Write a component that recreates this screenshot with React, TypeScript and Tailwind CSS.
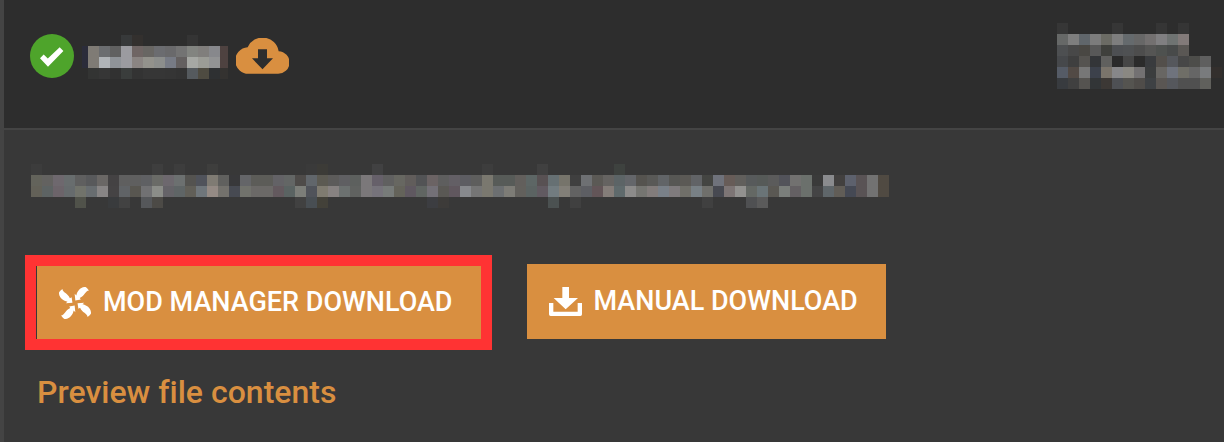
const CELL = 11;

type MosaicRow = { start: number; colors: string };

// Each row lists hex colours for consecutive cells; "-" leaves a cell empty.
const nameRows: MosaicRow[] = [
  { start: 0, colors: "- - - 37393a 33302e - - - - 343434" },
  { start: 0, colors: "7f7b75 6b6d70 606060 9b9ba0 6f6564 686663 6b6c70 69696b 737373 828480 807e7c 87888c 4e4240" },
  { start: 0, colors: "7f7b75 b0b4b8 8f9398 9b9ba0 8a8482 93928c 8c8e8c 777b85 646060 a6a8a4 9b9c96 929394 4e4240" },
  { start: 0, colors: "333433 363636 313131 3a3d3c 333333 363636 363636 353535 333333 555a5e 4e4b41 2e3032 343230" },
];

const infoRows: MosaicRow[] = [
  { start: 0, colors: "363636 - - - - 363636 - - - 353535 - 353535" },
  { start: 0, colors: "666867 7e7e7e 60666b 7c7c7c 6b6b64 7e7e7e 656a6d 676767 737070 807f81 6f7372 827a79" },
  { start: 0, colors: "4d4f51 484848 494743 585858 3f403c 4d4f52 4f5153 4d4d4d 555554 4e514f 484a4a 5a5754" },
  { start: 0, colors: "46484b 3f3f3f 555350 333538 60605e 2a2a2a 464646 2b2b2b 393b3e 534f4b 55575c 474747 4d4d4a 5f5f5f" },
  { start: 0, colors: "555b66 524a45 777777 3c414b 7a746b 878789 8a8882 737172 3b3d3e 686663 6f737d 6f6e67 666666 797b7d 332f2d" },
  { start: 0, colors: "383b3f 404040 555350 323537 3c3835 4e5054 555450 4f4c49 3e4144 5a5653 55575c 505050 505050 60605c" },
];

const descriptionRows: MosaicRow[] = [
  { start: 0, colors: "3c3c3c" },
  { start: 11, colors: "3e3e3e - 3d3d3d - - 3e3e3d" },
  { start: 25, colors: "3a3a3a 3c3b37 - - - - 414142" },
  { start: 41, colors: "3d3d3d - - - - 404040 - - - - - - 3e423f" },
];

const descriptionTop =
  "63635b 636260 6e686e 686d6e 5f5f5f 58595b 6a6765 444243 5f5f5f 5f5f5f 5f6063 6a6b67 6d686e 6c7070 545350 50535b 7f7b73 60605e 38383a 646568 5c5c58 5c5c58 636266 636665 4e4b49 61666b 5c5a52 5c5b5a 5f5f62 5d605e 7b787a 66606a 606060 676761 615d5b 525355 6b6364 5e5e5e 635f65 5d5d62 5e5e5d 7a786f 575b58 575b58 625f5c 5d6665 585153 667073 76746b 3f3f3f 6e7073 5b5955 656361 5c6466 64666a 55534f 595957 616467 575754 5b5955 616366 444542 6f727b 675c58 615f5c 575a5b 565a58 5b5b5b 52535a 727170 6b706c 3a3a3a 8a8b8e 42403f 5d616d 595355 727272 504a42";

const descriptionBottom =
  "636158 5d6363 6c646a 666b6d 71736b 686d70 888585 454344 606366 585650 717173 8b8d88 656368 5f6566 615f58 6f767b 948a84 73716c 474a52 71726c 6b6967 6b6967 63595e 5a6362 7c7e79 50535a 7f7b70 878281 6c7170 606260 7b787a 76737b 777b79 64635a 5f5860 606562 737077 5a5854 60575e 87898d 757575 7a786f 6c6f71 7d7c76 62605c 5b6362 615a61 727c80 827f78 626262 5d5e63 635558 847d79 5f6a6c 8c8b8a 757571 827c7b 798088 7f7b7d 706f69 788085 6f6f6b 474951 7d7575 92918f 646864 6a7477 5a5853 7a7e7b 646063 6b706c 444445 5f666a 615d57 454954 595355 727272 504a42";

const descriptionTails: MosaicRow[] = [
  { start: 4, colors: "50524a - - 393b3d 424242 - 55575a 4c4a46" },
  { start: 24, colors: "414141 484e53 434139" },
  { start: 36, colors: "3c3d41 3d3b39" },
  { start: 47, colors: "4b5151 - 404040" },
  { start: 61, colors: "404040 - - - 4f5052 5a5a5a" },
];

function Cells({ row, y }: { row: MosaicRow; y: number }) {
  return (
    <>
      {row.colors.split(" ").map((color, i) =>
        color === "-" ? null : (
          <rect key={i} x={(row.start + i) * CELL} y={y * CELL} width={CELL} height={CELL} fill={`#${color}`} />
        ),
      )}
    </>
  );
}

function NameMosaic() {
  return (
    <svg width="146" height="44" viewBox="-6 0 146 44" shapeRendering="crispEdges" className="shrink-0" aria-hidden="true">
      <rect x="-6" y="11" width="6" height="22" fill="#2b2c3a" />
      {nameRows.map((row, i) => (
        <Cells key={i} row={row} y={i} />
      ))}
    </svg>
  );
}

function InfoMosaic() {
  return (
    <svg width="165" height="66" viewBox="0 0 165 66" shapeRendering="crispEdges" className="shrink-0" aria-hidden="true">
      {infoRows.map((row, i) => (
        <Cells key={i} row={row} y={i} />
      ))}
    </svg>
  );
}

function DescriptionMosaic() {
  return (
    <svg width="858" height="44" viewBox="0 0 858 44" shapeRendering="crispEdges" className="block" aria-hidden="true">
      {descriptionRows.map((row, i) => (
        <Cells key={i} row={row} y={0} />
      ))}
      <Cells row={{ start: 0, colors: descriptionTop }} y={1} />
      <Cells row={{ start: 0, colors: descriptionBottom }} y={2} />
      {descriptionTails.map((row, i) => (
        <Cells key={i} row={row} y={3} />
      ))}
    </svg>
  );
}

function CheckIcon() {
  return (
    <svg width="44" height="44" viewBox="0 0 44 44" className="shrink-0" role="img" aria-label="Downloaded">
      <circle cx="22" cy="22" r="22" fill="#4ea42b" />
      <path d="M10 24.3 13.7 20.5 17.8 24.5 29.7 13.3 33.4 17 18 32.8Z" fill="#fff" />
    </svg>
  );
}

function CloudIcon() {
  return (
    <svg width="53" height="36" viewBox="0 0 159 108" className="shrink-0" aria-hidden="true">
      <path
        fillRule="evenodd"
        fill="#d98f40"
        d="M40 107.500A40 40 0 0 1 35 27.500A49 49 0 0 1 128 39.500A34 34 0 0 1 125 107.500ZM66 34V61H48L79.500 94 111 61H93V34Z"
      />
    </svg>
  );
}

function VortexIcon() {
  const blade = "M10 6C11 17 26 18 32 33L37 30 39.500 46 20 48 25 43C13 41-1 31 0 16L3 12Z";
  return (
    <svg width="32" height="32" viewBox="0 0 94 94" fill="currentColor" className="shrink-0" aria-hidden="true">
      <path d={blade} />
      <path d={blade} transform="rotate(90 47 47)" />
      <path d={blade} transform="rotate(180 47 47)" />
      <path d={blade} transform="rotate(270 47 47)" />
    </svg>
  );
}

function TrayIcon() {
  return (
    <svg width="33" height="29" viewBox="0 0 99 87" fill="currentColor" className="shrink-0" aria-hidden="true">
      <path d="M40 0H60V33H87L50 67 14 33H40Z" />
      <path d="M0 48H13V74H86V48H99V82Q99 87 94 87H5Q0 87 0 82Z" />
    </svg>
  );
}

export default function App() {
  return (
    <main className="flex min-h-screen flex-col border-b border-l-4 border-b-[#333333] border-l-[#444444] bg-[#383838] font-[Roboto,sans-serif]">
      <header className="flex items-start justify-between border-b-2 border-[#444444] bg-[#2d2d2d] pt-[23px] pr-0.5 pb-[39px] pl-[26px]">
        <div className="flex items-start gap-2 pt-[11px]">
          <CheckIcon />
          <div className="pt-px">
            <NameMosaic />
          </div>
          <div className="pt-1">
            <CloudIcon />
          </div>
        </div>
        <InfoMosaic />
      </header>

      <section className="pt-[34px] pb-7 pl-[21px]">
        <div className="pl-1.5">
          <DescriptionMosaic />
        </div>

        <div className="flex items-end gap-[35px] pt-[47px]">
          <div className="border-[11px] border-[#ff3333] pl-px">
            <button
              type="button"
              className="flex h-[73px] cursor-pointer items-center gap-3 bg-[#d98f40] pr-7 pl-[22px] text-[27px] font-medium whitespace-nowrap text-white"
            >
              <VortexIcon />
              MOD MANAGER DOWNLOAD
            </button>
          </div>
          <div className="pb-[11px]">
            <button
              type="button"
              className="flex h-[75px] cursor-pointer items-center gap-3 bg-[#d98f40] pr-7 pl-[22px] text-[27px] font-medium whitespace-nowrap text-white"
            >
              <TrayIcon />
              MANUAL DOWNLOAD
            </button>
          </div>
        </div>

        <a
          href="#contents"
          className="mt-5 ml-3 inline-block text-[32px] leading-[44px] font-medium text-[#d98f40] [font-variant-ligatures:none]"
        >
          Preview file contents
        </a>
      </section>
    </main>
  );
}
